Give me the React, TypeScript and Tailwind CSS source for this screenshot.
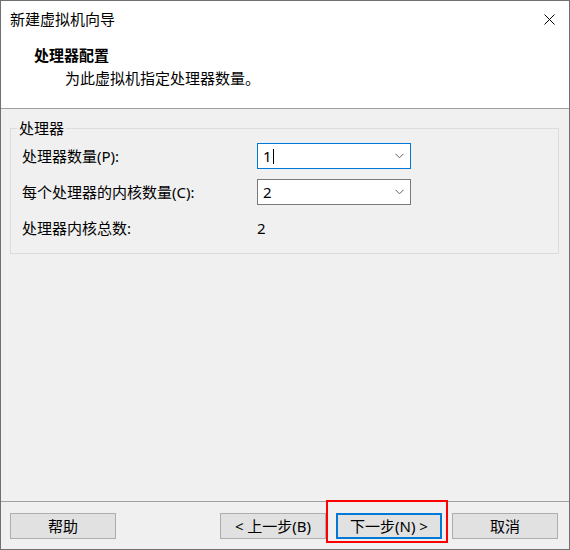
import React from "react";

function Chevron() {
  return (
    <svg width="9" height="6" viewBox="0 0 9 6" className="block">
      <path d="M0.5 0.8L4.5 4.8L8.5 0.8" fill="none" stroke="#606060" strokeWidth="1" />
    </svg>
  );
}

function Btn({ children, primary }: { children: React.ReactNode; primary?: boolean }) {
  return (
    <div
      className={
        primary
          ? "w-[106px] h-[26px] border-2 border-[#0078d7] bg-[#e1e1e1] flex items-center justify-center"
          : "w-[106px] h-[26px] border border-[#adadad] bg-[#e1e1e1] flex items-center justify-center"
      }
    >
      {children}
    </div>
  );
}

export default function App() {
  return (
    <div className="relative w-[570px] h-[550px] border border-[#707070] bg-[#f0f0f0] flex flex-col font-['Noto_Sans','Noto_Sans_CJK_SC',sans-serif] text-[15px] leading-[20px] text-black">
      <div className="h-[108px] shrink-0 bg-white border-b border-[#a0a0a0] flex flex-col">
        <div className="h-[36px] flex items-center justify-between pl-[9px] pr-[14px]">
          <span>新建虚拟机向导</span>
          <svg width="11" height="11" viewBox="0 0 11 11" className="block">
            <path d="M0.5 0.5L10.5 10.5M10.5 0.5L0.5 10.5" stroke="#000" strokeWidth="1" />
          </svg>
        </div>
        <div className="pt-[8px] pl-[33px] font-bold">处理器配置</div>
        <div className="mt-[3px] pl-[64px]">为此虚拟机指定处理器数量。</div>
      </div>

      <div className="flex-1 pt-[9px] pl-[9px] pr-[10px]">
        <fieldset className="border border-[#dcdcdc] pl-[6px] pb-[12px]">
          <legend className="px-[2px]">处理器</legend>
          <div className="pl-[5px] mt-[5px] grid grid-cols-[235px_154px] auto-rows-[26px] gap-y-[10px] items-center">
            <span>处理器数量(P):</span>
            <div className="h-[26px] bg-white border border-[#0078d7] flex items-center justify-between pl-[5px] pr-[6px]">
              <span className="flex items-center">
                1<span className="ml-[1px] w-px h-[15px] bg-black" />
              </span>
              <Chevron />
            </div>
            <span>每个处理器的内核数量(C):</span>
            <div className="h-[26px] bg-white border border-[#7a7a7a] flex items-center justify-between pl-[5px] pr-[6px]">
              <span>2</span>
              <Chevron />
            </div>
            <span>处理器内核总数:</span>
            <span>2</span>
          </div>
        </fieldset>
      </div>

      <div className="h-[48px] shrink-0 border-t border-[#a0a0a0] pt-[11px] pl-[9px] pr-[11px] flex justify-between items-start">
        <Btn>帮助</Btn>
        <div className="flex gap-[10px]">
          <Btn>&lt; 上一步(B)</Btn>
          <Btn primary>下一步(N) &gt;</Btn>
          <Btn>取消</Btn>
        </div>
      </div>

      <div className="absolute left-[325px] top-[499px] w-[122px] h-[43px] border-2 border-[#ff0000]" />
    </div>
  );
}
